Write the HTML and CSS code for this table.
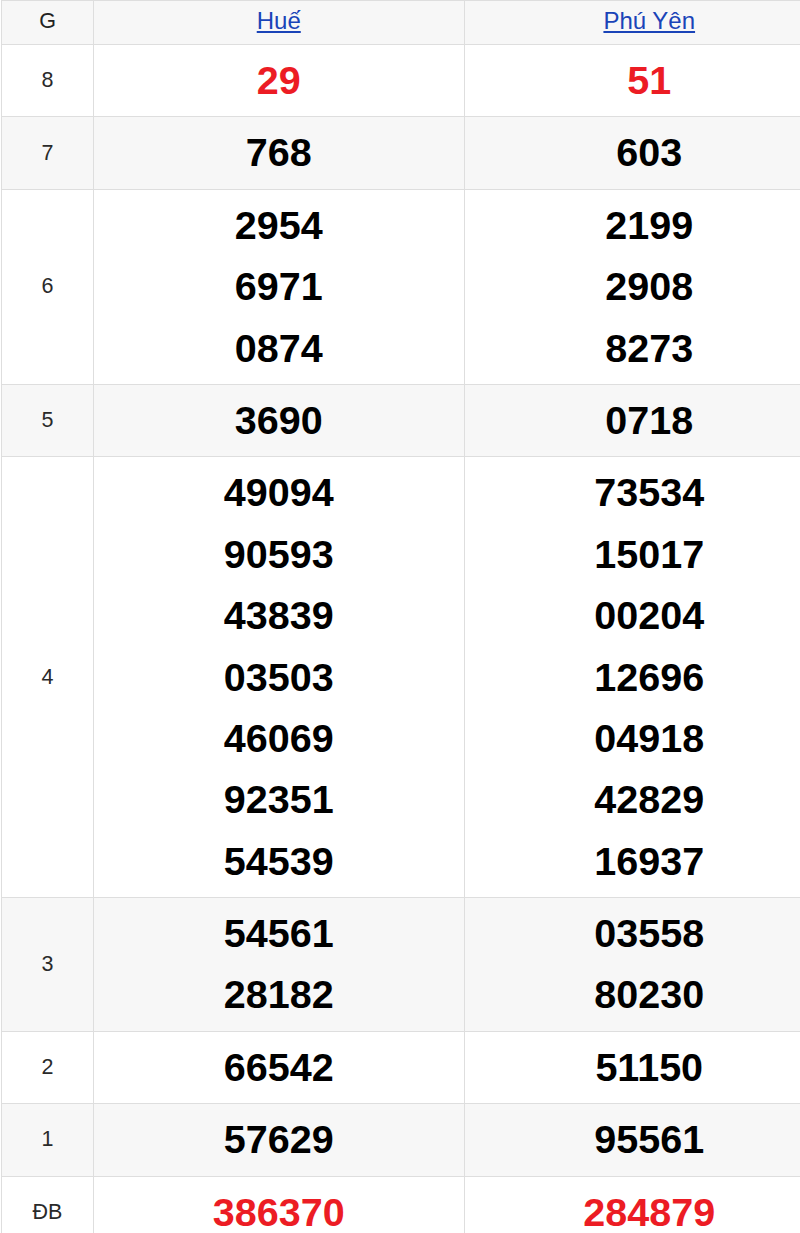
FILE: index.html
```html
<!DOCTYPE html>
<html lang="vi">
<head>
<meta charset="utf-8">
<title>Kết quả xổ số</title>
<link rel="stylesheet" href="styles.css">
</head>
<body>
<table class="kq">
  <thead>
    <tr>
      <th class="g">G</th>
      <th class="prov"><a href="#">Huế</a></th>
      <th class="prov"><a href="#">Phú Yên</a></th>
    </tr>
  </thead>
  <tbody>
    <tr>
      <td class="g">8</td>
      <td class="num red"><div>29</div></td>
      <td class="num red"><div>51</div></td>
    </tr>
    <tr class="alt">
      <td class="g">7</td>
      <td class="num"><div>768</div></td>
      <td class="num"><div>603</div></td>
    </tr>
    <tr>
      <td class="g">6</td>
      <td class="num"><div>2954</div><div>6971</div><div>0874</div></td>
      <td class="num"><div>2199</div><div>2908</div><div>8273</div></td>
    </tr>
    <tr class="alt">
      <td class="g">5</td>
      <td class="num"><div>3690</div></td>
      <td class="num"><div>0718</div></td>
    </tr>
    <tr>
      <td class="g">4</td>
      <td class="num"><div>49094</div><div>90593</div><div>43839</div><div>03503</div><div>46069</div><div>92351</div><div>54539</div></td>
      <td class="num"><div>73534</div><div>15017</div><div>00204</div><div>12696</div><div>04918</div><div>42829</div><div>16937</div></td>
    </tr>
    <tr class="alt">
      <td class="g">3</td>
      <td class="num"><div>54561</div><div>28182</div></td>
      <td class="num"><div>03558</div><div>80230</div></td>
    </tr>
    <tr>
      <td class="g">2</td>
      <td class="num"><div>66542</div></td>
      <td class="num"><div>51150</div></td>
    </tr>
    <tr class="alt">
      <td class="g">1</td>
      <td class="num"><div>57629</div></td>
      <td class="num"><div>95561</div></td>
    </tr>
    <tr>
      <td class="g">ĐB</td>
      <td class="num red"><div>386370</div></td>
      <td class="num red"><div>284879</div></td>
    </tr>
  </tbody>
</table>
</body>
</html>
```

FILE: styles.css
```css
html, body {
  margin: 0;
  padding: 0;
  overflow: hidden;
  background: #fff;
}

body {
  font-family: "Liberation Sans", Arial, sans-serif;
  color: #222;
}

.kq {
  border-collapse: collapse;
  width: 834px;
  margin-left: 1px;
  table-layout: fixed;
}

.kq th,
.kq td {
  border: 1px solid #dedede;
  text-align: center;
  vertical-align: middle;
  padding: 0;
}

.kq th.g,
.kq td.g {
  width: 91px;
}

.kq thead tr {
  background: #f7f7f7;
}

.kq th {
  height: 40px;
  padding-bottom: 3px;
  font-weight: normal;
  font-size: 21.5px;
  color: #222;
}

.kq th.prov a {
  color: #1a44b8;
  text-decoration: underline;
  font-size: 24px;
}

.kq td.g {
  font-size: 21.5px;
  color: #2a2a2a;
}

.kq tr.alt {
  background: #f7f7f7;
}

.kq td.num {
  padding: 5px 0;
  font-weight: bold;
  font-size: 39.5px;
  color: #000;
}

.kq td.num div {
  line-height: 61.4px;
  height: 61.4px;
}

.kq td.red {
  color: #ec1c24;
}
```
